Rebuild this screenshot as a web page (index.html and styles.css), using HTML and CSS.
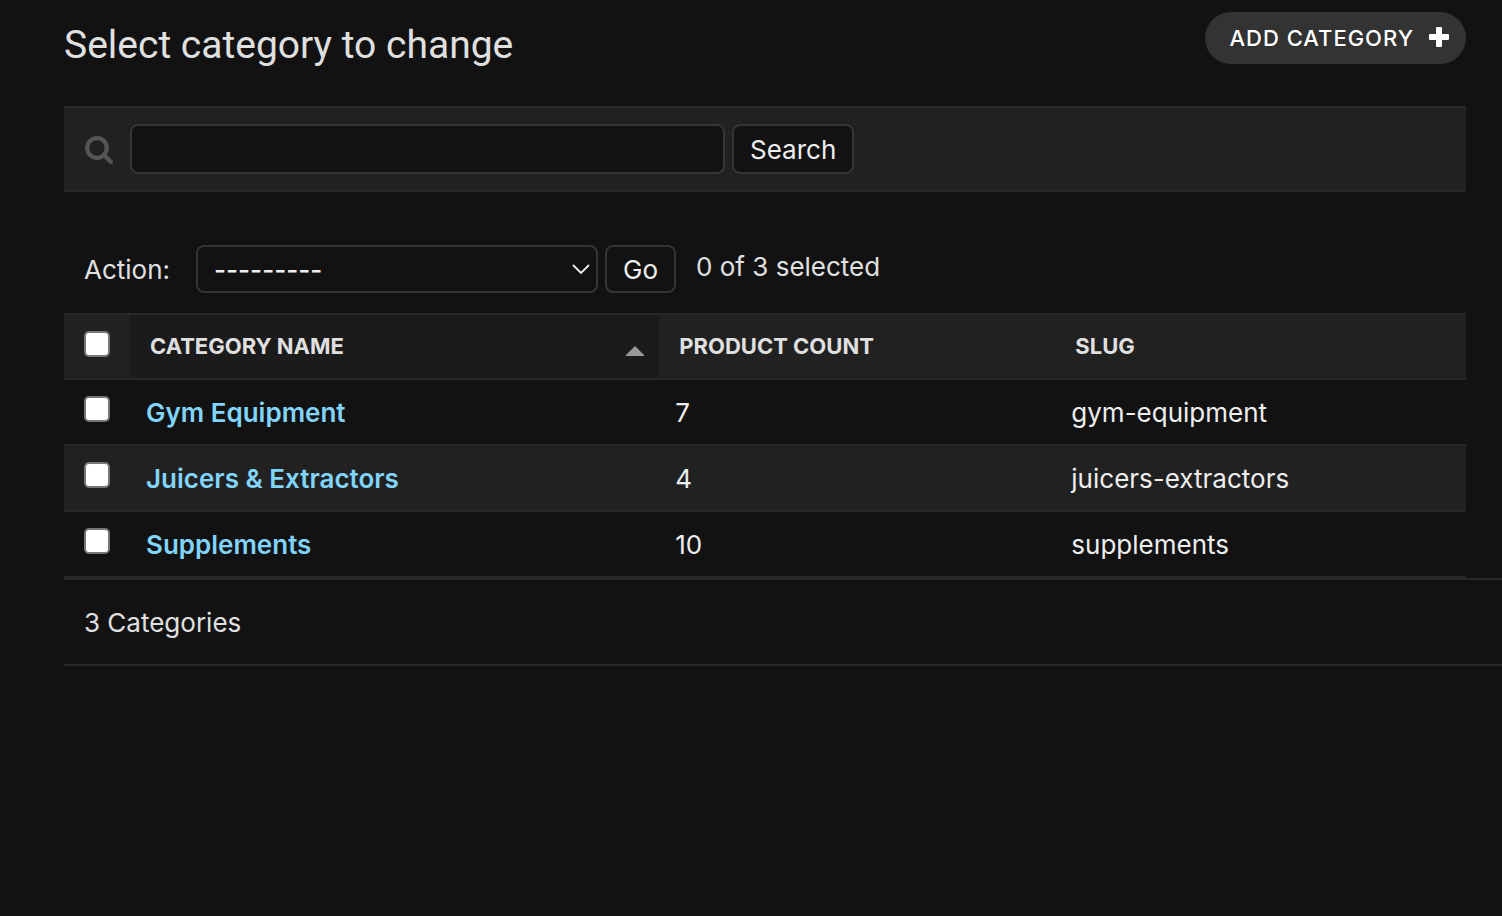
FILE: index.html
```html
<!DOCTYPE html>
<html lang="en">
<head>
<meta charset="utf-8">
<title>Select category to change</title>
<link rel="stylesheet" href="styles.css">
</head>
<body>
<main class="content">
  <header class="page-header">
    <h1 class="title">Select category to change</h1>
    <a class="add-link" href="#">ADD CATEGORY
      <svg class="add-icon" viewBox="0 0 22 22" aria-hidden="true"><path fill="currentColor" d="M9 0h4a1 1 0 0 1 1 1v6h6a1 1 0 0 1 1 1v4a1 1 0 0 1-1 1h-6v6a1 1 0 0 1-1 1H9a1 1 0 0 1-1-1v-6H2a1 1 0 0 1-1-1V8a1 1 0 0 1 1-1h6V1a1 1 0 0 1 1-1z"/></svg>
    </a>
  </header>

  <form class="toolbar" role="search">
    <label class="search-label" for="searchbar" aria-label="Search">
      <svg class="search-icon" viewBox="0 0 28 28" aria-hidden="true"><g fill="none" stroke="currentColor"><circle cx="12" cy="12" r="9.8" stroke-width="4.2"/><path d="M19.5 19.5l6.2 6.2" stroke-width="4.4" stroke-linecap="round"/></g></svg>
    </label>
    <input class="field search-input" id="searchbar" type="text">
    <button class="field button" type="button">Search</button>
  </form>

  <form class="actions">
    <label class="action-label" for="action">Action:</label>
    <span class="select-wrap">
      <select class="field action-select" id="action"><option>---------</option></select>
      <svg class="chevron" viewBox="0 0 18 12" aria-hidden="true"><path d="M1 2l8 8 8-8" fill="none" stroke="currentColor" stroke-width="1.8"/></svg>
    </span>
    <button class="field button" type="button">Go</button>
    <span class="counter">0 of 3 selected</span>
  </form>

  <table class="results">
    <colgroup><col class="col-check"><col class="col-name"><col class="col-count"><col></colgroup>
    <thead>
      <tr>
        <th class="check" scope="col"><input class="box" type="checkbox" aria-label="Select all categories"></th>
        <th class="sorted" scope="col"><span class="sort-head">CATEGORY NAME <svg class="sort-icon" viewBox="0 0 18 10" aria-hidden="true"><path d="M9 0l9 9v1H0V9z" fill="currentColor"/></svg></span></th>
        <th scope="col">PRODUCT COUNT</th>
        <th scope="col">SLUG</th>
      </tr>
    </thead>
    <tbody>
      <tr>
        <td class="check"><input class="box" type="checkbox" aria-label="Select Gym Equipment"></td>
        <th scope="row"><a class="name" href="#">Gym Equipment</a></th>
        <td>7</td>
        <td>gym-equipment</td>
      </tr>
      <tr>
        <td class="check"><input class="box" type="checkbox" aria-label="Select Juicers &amp; Extractors"></td>
        <th scope="row"><a class="name" href="#">Juicers &amp; Extractors</a></th>
        <td>4</td>
        <td>juicers-extractors</td>
      </tr>
      <tr>
        <td class="check"><input class="box" type="checkbox" aria-label="Select Supplements"></td>
        <th scope="row"><a class="name" href="#">Supplements</a></th>
        <td>10</td>
        <td>supplements</td>
      </tr>
    </tbody>
  </table>
</main>
<p class="paginator">3 Categories</p>
</body>
</html>
```

FILE: styles.css
```css
* {
  box-sizing: border-box;
}

body {
  margin: 0;
  background: #121212;
  color: #e0e0e0;
  font-family: Inter, Roboto, sans-serif;
  font-size: 26px;
  line-height: 32px;
}

.content {
  padding: 12px 36px 0 64px;
}

.page-header {
  display: flex;
  justify-content: space-between;
  align-items: flex-start;
  margin-bottom: 28px;
}

.title {
  margin: 0;
  font-family: Roboto, Inter, sans-serif;
  font-size: 39px;
  font-weight: 400;
  line-height: 66px;
}

.add-link {
  display: flex;
  align-items: center;
  gap: 14px;
  height: 52px;
  padding: 0 16px 0 24px;
  border-radius: 26px;
  background: #333;
  color: #fff;
  font-size: 22px;
  font-weight: 500;
  letter-spacing: 1px;
  text-decoration: none;
}

.add-icon {
  width: 22px;
  height: 22px;
}

.toolbar {
  display: flex;
  align-items: center;
  padding: 16px 20px;
  border: solid #282828;
  border-width: 2px 0;
  background: #212121;
}

.search-label {
  display: flex;
  padding: 2px 17px 0 1px;
  color: #555;
}

.search-icon {
  width: 28px;
  height: 28px;
}

.field {
  border: 2px solid #353535;
  border-radius: 8px;
  background: #121212;
  color: #eee;
  font: inherit;
}

.search-input {
  flex: 0 1 595px;
  min-width: 0;
  height: 50px;
  margin-right: 7px;
  padding: 0 12px;
}

.button {
  padding: 2px 16px 0;
}

.toolbar .button {
  height: 50px;
}

.actions {
  display: flex;
  align-items: center;
  padding: 53px 20px 20px;
}

.action-label {
  padding: 2px 26px 0 0;
}

.select-wrap {
  position: relative;
  flex: 0 1 402px;
  margin-right: 7px;
}

.action-select {
  display: block;
  width: 100%;
  height: 48px;
  padding: 2px 40px 0 16px;
  appearance: none;
  font-weight: 500;
}

.chevron {
  position: absolute;
  top: 18px;
  right: 8px;
  width: 18px;
  height: 12px;
  color: #eee;
  pointer-events: none;
}

.actions .button {
  height: 48px;
}

.counter {
  margin: 0 0 4px 20px;
}

.results {
  width: 100%;
  table-layout: fixed;
  border-collapse: separate;
  border-spacing: 0;
  color: #eee;
}

.col-check {
  width: 66px;
}

.col-name {
  width: 37.75%;
}

.col-count {
  width: 28.25%;
}

.results th,
.results td {
  height: 66px;
  padding: 2px 16px 0;
  border-bottom: 2px solid #282828;
  text-align: left;
}

.results thead th {
  height: 67px;
  padding: 0 20px 2px;
  border-top: 2px solid #282828;
  background: #212121;
  color: #e0e0e0;
  font-size: 22px;
  font-weight: 700;
}

.results thead .sorted {
  padding-right: 15px;
  background: #1b1b1b;
}

.sort-head {
  display: flex;
  align-items: center;
  justify-content: space-between;
}

.sort-icon {
  width: 18px;
  height: 10px;
  margin-top: 10px;
  color: #999;
}

.results .check,
.results thead .check {
  padding: 16px 20px 0;
  vertical-align: top;
}

.results tbody tr:nth-child(even) {
  background: #212121;
}

.box {
  display: block;
  width: 26px;
  height: 26px;
  margin: 0;
  border: 2px solid #767676;
  border-radius: 5px;
  background: #fff;
  appearance: none;
}

.box:checked {
  background: #79aec8;
}

.name {
  color: #81d4fa;
  font-weight: 600;
  text-decoration: none;
}

.paginator {
  margin: 0 0 0 64px;
  padding: 27px 20px 25px;
  border: solid #282828;
  border-width: 2px 0;
}
```
